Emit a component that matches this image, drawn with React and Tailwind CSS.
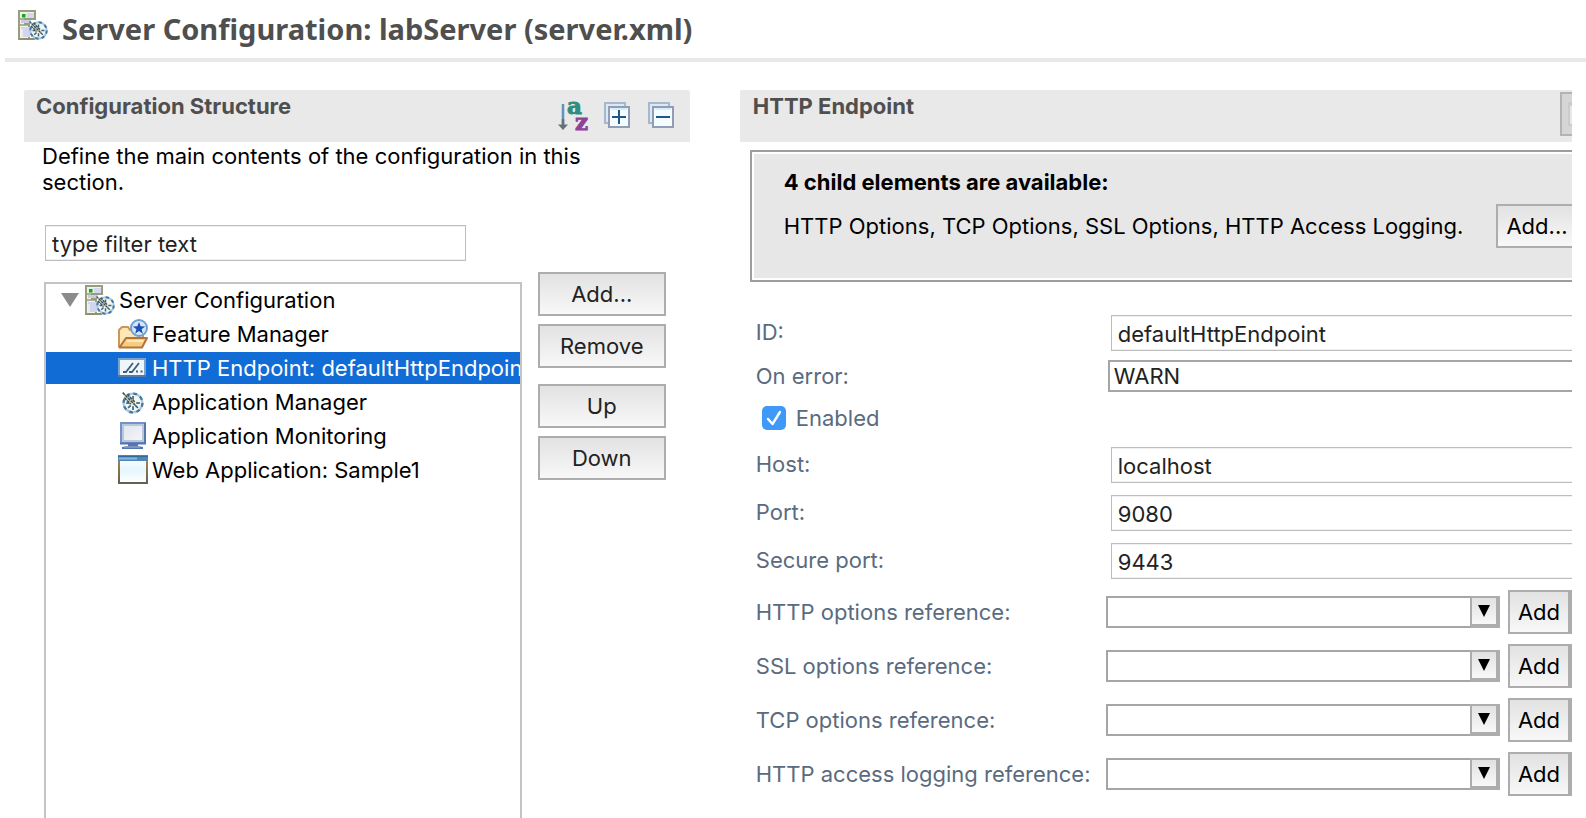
import React from 'react';

const buttonFace = 'border-2 border-[#adadad] bg-linear-to-b from-[#e2e2e2] to-[#f8f8f8]';
const fieldFace =
  'h-9 w-full border border-[#bdbdbd] bg-white pt-0.5 pl-1.5 text-[#222] outline-none shadow-[inset_0_1px_0_#f0f0f0,inset_0_-1px_0_#f0f0f0]';

const spokeAngles = [0, 45, 90, 135, 180, 225, 270];

function Gear({ cx, cy, scale = 1 }) {
  return (
    <g transform={`translate(${cx} ${cy}) scale(${scale})`}>
      <circle r="8.2" fill="#f3f5ee" stroke="#a9c8de" strokeWidth="2" />
      <circle r="8.2" fill="none" stroke="#41789f" strokeWidth="2" strokeDasharray="3.22 3.22" />
      {spokeAngles.map((angle) => (
        <path key={angle} d="M2.800 0H6" stroke="#3f6384" strokeWidth="1.500" transform={`rotate(${angle})`} />
      ))}
      <path d="M-8.500 -8.500L-3 -6.500L2 -.5L1 2L-2 1L-7 -4z" fill="#d9d9b8" />
      <path d="M-9 -9L2 2M-5 -7.500L1.500 -1M-7.500 -4.500L-2 1" fill="none" stroke="#34505f" strokeWidth="1.300" strokeDasharray="2.600 .7" />
    </g>
  );
}

function ServerIcon() {
  return (
    <svg viewBox="0 0 30 30" className="size-[30px] shrink-0" aria-hidden="true">
      <path d="M1 1h16v8H7v5h4v15H1z" fill="#f2f3ea" stroke="#979d7e" strokeWidth="2" />
      <path d="M2 9h15M2 15h9" stroke="#979d7e" strokeWidth="1.600" />
      <rect x="3" y="3" width="6" height="5" fill="#dff2da" />
      <rect x="9" y="3" width="7" height="5" fill="#d5d7ee" />
      <rect x="4" y="4" width="3.500" height="3.500" fill="#17a32a" />
      <path d="M3 11.500h10" stroke="#c9cbe0" strokeWidth="3" />
      <path d="M3 17h9v10H3z" fill="#d3d5ee" />
      <path d="M4 19v8" stroke="#fff" fill="none" />
      <path d="M1 29h16" stroke="#8b926d" strokeWidth="2" />
      <Gear cx={20.5} cy={20.5} />
    </svg>
  );
}

function FeatureIcon() {
  return (
    <svg viewBox="0 0 30 30" className="size-[30px] shrink-0" aria-hidden="true">
      <path d="M1 28V11l3-3h6l2 3h13v8" fill="#fbe8b4" stroke="#cf9552" strokeWidth="2" />
      <path d="M1.500 28.500L8 19h21l-5 9.500z" fill="#f8cd82" stroke="#b5733c" strokeWidth="2" strokeLinejoin="round" />
      <path d="M9 21h17l-1 2H8z" fill="#fde8b8" />
      <circle cx="21" cy="9" r="8" fill="#d6e6f6" stroke="#6f9fd0" strokeWidth="2" />
      <path d="M21 3l1.600 4.300 4.600.1-3.600 2.900 1.300 4.400-3.900-2.600-3.900 2.600 1.300-4.400-3.600-2.900 4.600-.1z" fill="#1c50b8" />
    </svg>
  );
}

function EndpointIcon() {
  return (
    <svg viewBox="0 0 30 30" className="size-[30px] shrink-0" aria-hidden="true">
      <rect x="1" y="6" width="26" height="17" fill="#eef6fc" stroke="#7ba3d0" strokeWidth="2" />
      <path d="M0 23h28" stroke="#45699c" strokeWidth="1.500" />
      <path d="M5 19h3l7-9M11 19h3l7-9" fill="none" stroke="#3d5f7c" strokeWidth="1.800" />
      <path d="M18 17.500h2v2h-2zM22.500 17.500h2v2h-2z" fill="#3d5f7c" />
    </svg>
  );
}

function ManagerIcon() {
  return (
    <svg viewBox="0 0 30 30" className="size-[30px] shrink-0" aria-hidden="true">
      <Gear cx={15} cy={16} scale={1.15} />
    </svg>
  );
}

function MonitorIcon() {
  return (
    <svg viewBox="0 0 30 30" className="size-[30px] shrink-0" aria-hidden="true">
      <defs>
        <linearGradient id="screen" x1="0" y1="0" x2="1" y2="1">
          <stop offset="0" stopColor="#dfe4ec" />
          <stop offset="1" stopColor="#f6f7fa" />
        </linearGradient>
      </defs>
      <rect x="3" y="2" width="24" height="20" fill="url(#screen)" stroke="#7493c6" strokeWidth="2" />
      <rect x="5" y="4" width="20" height="16" fill="none" stroke="#b9c6de" strokeWidth="2" />
      <path d="M2 22.500h26M27 2v20" stroke="#5573ad" strokeWidth="1.800" />
      <path d="M10 23h10v2l5 1v2H4v-2l6-1z" fill="#5875ae" />
      <path d="M6 26h16" stroke="#a3b5d6" />
    </svg>
  );
}

function WindowIcon() {
  return (
    <svg viewBox="0 0 30 30" className="size-[30px] shrink-0" aria-hidden="true">
      <defs>
        <linearGradient id="pane" x1="0" y1="0" x2="0" y2="1">
          <stop offset="0" stopColor="#fff" />
          <stop offset=".5" stopColor="#e6f6fd" />
          <stop offset="1" stopColor="#fff" />
        </linearGradient>
        <linearGradient id="frame" x1="0" y1="0" x2="0" y2="1">
          <stop offset="0" stopColor="#ab8a48" />
          <stop offset="1" stopColor="#645f52" />
        </linearGradient>
      </defs>
      <rect x="1" y="2" width="28" height="26" fill="url(#pane)" stroke="url(#frame)" strokeWidth="2" />
      <path d="M0 1h30v5H0z" fill="#4d87b8" />
      <path d="M0 1h30" stroke="#2e6391" strokeWidth="1.600" />
      <path d="M1 3.500h18" stroke="#87b8dc" strokeWidth="2" />
    </svg>
  );
}

function SortIcon() {
  return (
    <svg viewBox="0 0 34 32" className="h-8 w-[34px] overflow-visible" aria-hidden="true">
      <path d="M9 5v20" stroke="#5d94bd" strokeWidth="2.500" />
      <path d="M9 20v8" stroke="#66707a" strokeWidth="2.500" />
      <path d="M4 25.500h10L9 31z" fill="#66707a" />
      <text x="13" y="15" className="fill-[#2f8d80] stroke-[#2f8d80] font-['DejaVu_Serif',serif] text-[23px] font-bold">a</text>
      <text x="21" y="31" className="fill-[#8f4398] stroke-[#8f4398] font-['DejaVu_Serif',serif] text-[23px] font-bold">z</text>
    </svg>
  );
}

function StackIcon({ plus }) {
  return (
    <svg viewBox="0 0 26 26" className="size-[26px]" aria-hidden="true">
      <rect x="1" y="1" width="20" height="20" fill="#d8eaf6" stroke="#a9b6cb" strokeWidth="2" />
      <rect x="5" y="5" width="20" height="20" fill="#f5fcff" stroke="#929db5" strokeWidth="2" />
      <path d="M7 7h16" stroke="#d6eefa" strokeWidth="2" />
      <path d={plus ? 'M8 15h14M15 8v14' : 'M8 15h14'} stroke="#1c5788" strokeWidth="2" />
    </svg>
  );
}

const treeItems = [
  { label: 'Feature Manager', Icon: FeatureIcon },
  { label: 'HTTP Endpoint: defaultHttpEndpoint', Icon: EndpointIcon, selected: true },
  { label: 'Application Manager', Icon: ManagerIcon },
  { label: 'Application Monitoring', Icon: MonitorIcon },
  { label: 'Web Application: Sample1', Icon: WindowIcon },
];

const references = [
  { id: 'http-options', label: 'HTTP options reference:' },
  { id: 'ssl-options', label: 'SSL options reference:' },
  { id: 'tcp-options', label: 'TCP options reference:' },
  { id: 'access-logging', label: 'HTTP access logging reference:' },
];

function ActionButton({ children }) {
  return (
    <button type="button" className={`h-11 w-32 text-[#222] ${buttonFace}`}>
      {children}
    </button>
  );
}

function TextRow({ id, label, value }) {
  return (
    <div className="flex items-center">
      <label htmlFor={id} className="w-[355px] shrink-0 pb-0.5">{label}</label>
      <input id={id} type="text" defaultValue={value} spellCheck={false} className={`border-r-0 ${fieldFace}`} />
    </div>
  );
}

function ReferenceRow({ id, label }) {
  return (
    <div className="flex items-center">
      <label htmlFor={id} className="w-[350px] shrink-0 whitespace-nowrap">{label}</label>
      <div className="relative mr-2 h-8 flex-1">
        <select id={id} className="h-8 w-full appearance-none border-2 border-[#a6a6a6] bg-white outline-none">
          <option></option>
        </select>
        <span className={`pointer-events-none absolute inset-y-0 right-0 flex w-[30px] items-center justify-center border-r-4 border-b-4 ${buttonFace}`}>
          <svg viewBox="0 0 12 12" className="size-3" aria-hidden="true">
            <path d="M0 0h12L6 12z" fill="#000" />
          </svg>
        </span>
      </div>
      <button type="button" className={`h-11 w-16 border-r-4 text-black ${buttonFace}`}>Add</button>
    </div>
  );
}

function StructurePanel() {
  return (
    <section className="flex min-w-0 flex-col">
      <header className="flex h-[52px] justify-between rounded-t-xs bg-[#e9e9e9] pl-3">
        <h2 className="pt-[3px] font-bold text-[#4f4f4f]">Configuration Structure</h2>
        <div className="flex items-center gap-[18px] pr-4 pb-0.5">
          <button type="button" aria-label="Sort alphabetically" className="-mr-0.5"><SortIcon /></button>
          <button type="button" aria-label="Expand all"><StackIcon plus /></button>
          <button type="button" aria-label="Collapse all"><StackIcon /></button>
        </div>
      </header>
      <p className="mr-20 ml-[18px] pt-px text-black">
        Define the main contents of the configuration in this section.
      </p>
      <div className="mt-[30px] mr-6 ml-5 flex flex-1 gap-4">
        <div className="flex min-w-0 flex-1 flex-col">
          <div className="mr-14 ml-px max-w-[422px]">
            <input
              type="text"
              aria-label="Filter"
              defaultValue="type filter text"
              spellCheck={false}
              className={fieldFace}
            />
          </div>
          <ul role="tree" className="mt-[21px] flex-1 overflow-hidden border-2 border-b-0 border-[#c4c4c4] bg-white text-black">
            <li role="treeitem" aria-expanded="true">
              <div className="mb-0.5 flex h-8 items-center gap-0.5 pl-[15px] whitespace-nowrap">
                <svg viewBox="0 0 18 14" className="mr-1 h-3.5 w-[18px]" aria-hidden="true">
                  <path d="M0 0h18L9 14z" fill="#8b8b8b" />
                </svg>
                <ServerIcon />
                <span className="pl-0.5">Server Configuration</span>
              </div>
              <ul role="group" className="flex flex-col gap-0.5">
                {treeItems.map(({ label, Icon, selected }) => (
                  <li
                    key={label}
                    role="treeitem"
                    aria-selected={Boolean(selected)}
                    className={`flex h-8 items-center gap-1 pl-[72px] whitespace-nowrap ${
                      selected ? 'bg-[#116cd6] text-white' : ''
                    }`}
                  >
                    <Icon />
                    {label}
                  </li>
                ))}
              </ul>
            </li>
          </ul>
        </div>
        <div className="mt-[47px] flex flex-col gap-4">
          <div className="flex flex-col gap-2">
            <ActionButton>Add...</ActionButton>
            <ActionButton>Remove</ActionButton>
          </div>
          <div className="flex flex-col gap-2">
            <ActionButton>Up</ActionButton>
            <ActionButton>Down</ActionButton>
          </div>
        </div>
      </div>
    </section>
  );
}

function EndpointPanel() {
  return (
    <section className="min-w-0 overflow-hidden">
      <header className="flex h-[52px] justify-between rounded-tl-xs bg-[#e9e9e9] pl-[13px]">
        <h2 className="pt-[3px] font-bold text-[#4f4f4f]">HTTP Endpoint</h2>
        <button
          type="button"
          disabled
          aria-label="Browse"
          className="mt-0.5 flex h-11 w-3 items-center overflow-hidden border-2 border-r-0 border-[#b3b3b3] bg-[#d6d6d6] pl-1.5"
        >
          <span className="h-6 w-6 shrink-0 border-2 border-t-4 border-[#cccccc] bg-[#e8e8e8]" />
        </button>
      </header>

      <div className="mt-2 ml-2.5 border-2 border-r-0 border-[#9e9e9e] bg-white py-0.5 pl-0.5">
        <div className="h-31 bg-[#e7e7e7] pt-[15px] pl-[30px] text-black">
          <p className="font-bold">4 child elements are available:</p>
          <div className="mt-[9px] flex items-center justify-between">
            <p className="whitespace-nowrap">HTTP Options, TCP Options, SSL Options, HTTP Access Logging.</p>
            <button type="button" className={`h-11 w-[76px] shrink-0 border-r-0 pl-1 whitespace-nowrap ${buttonFace}`}>Add...</button>
          </div>
        </div>
      </div>

      <form className="mt-[33px] ml-4 flex flex-col text-[#5a6b80]">
        <TextRow id="endpoint-id" label="ID:" value="defaultHttpEndpoint" />
        <div className="mt-[9px] flex items-center">
          <label htmlFor="on-error" className="w-[352px] shrink-0">On error:</label>
          <select
            id="on-error"
            defaultValue="WARN"
            className="h-8 w-full appearance-none border-2 border-r-0 border-[#a6a6a6] bg-white pl-1 leading-7 text-[#222] outline-none"
          >
            <option>FAIL</option>
            <option>IGNORE</option>
            <option>WARN</option>
          </select>
        </div>
        <div className="mt-3.5 flex h-6 items-center gap-2.5 pl-1.5">
          <span className="grid size-6">
            <input
              id="enabled"
              type="checkbox"
              defaultChecked
              className="col-start-1 row-start-1 size-6 appearance-none rounded-[5px] bg-[#3f99f8]"
            />
            <svg viewBox="0 0 24 24" className="pointer-events-none col-start-1 row-start-1 size-6" aria-hidden="true">
              <path d="M6 13l4.500 5L18 6" fill="none" stroke="#fff" strokeWidth="2.400" strokeLinecap="round" strokeLinejoin="round" />
            </svg>
          </span>
          <label htmlFor="enabled">Enabled</label>
        </div>
        <div className="mt-[17px] flex flex-col gap-3">
          <TextRow id="host" label="Host:" value="localhost" />
          <TextRow id="port" label="Port:" value="9080" />
          <TextRow id="secure-port" label="Secure port:" value="9443" />
        </div>
        <div className="mt-[11px] flex flex-col gap-2.5">
          {references.map((reference) => (
            <ReferenceRow key={reference.id} {...reference} />
          ))}
        </div>
      </form>
    </section>
  );
}

export default function App() {
  return (
    <div className="flex min-h-screen flex-col bg-white font-['Inter','Liberation_Sans',sans-serif] text-[22px] leading-[26px]">
      <header className="ml-[5px] flex h-[62px] gap-3.5 border-b-4 border-[#e8e8e8] pt-2.5 pl-[13px]">
        <ServerIcon />
        <h1 className="font-['Noto_Sans',sans-serif] text-[29px] leading-[38px] font-bold whitespace-nowrap text-[#4f4f4f]">
          Server Configuration: labServer (server.xml)
        </h1>
      </header>
      <main className="mt-7 mr-3.5 ml-6 grid flex-1 grid-cols-[4fr_5fr] gap-[50px]">
        <StructurePanel />
        <EndpointPanel />
      </main>
    </div>
  );
}
